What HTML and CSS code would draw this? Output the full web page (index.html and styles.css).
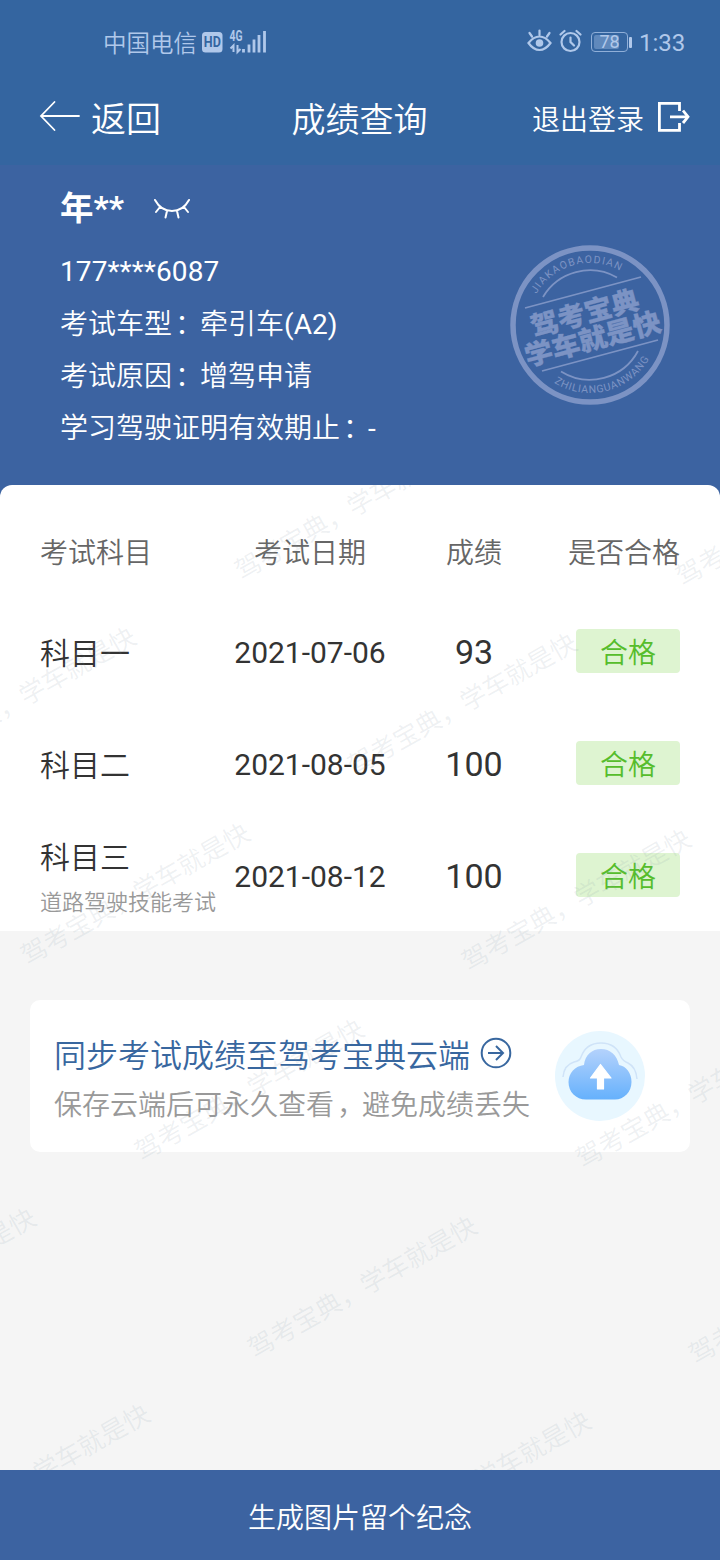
FILE: index.html
```
<!DOCTYPE html>
<html lang="zh-CN">
<head>
<meta charset="utf-8">
<title>成绩查询</title>
<link rel="stylesheet" href="styles.css">
</head>
<body>
<div class="screen">
  <header class="top">
    <div class="status">
      <span class="carrier">中国电信</span>
      <svg class="signal" width="66" height="28" viewBox="0 0 66 28">
        <rect x="1" y="4" width="20.500" height="20.500" rx="3.500" fill="currentColor"/>
        <text class="hd" x="11.300" y="19" text-anchor="middle" textLength="17" lengthAdjust="spacingAndGlyphs">HD</text>
        <text class="net" x="28.500" y="12.500" textLength="13" lengthAdjust="spacingAndGlyphs">4G</text>
        <path d="M32.500 24V17.500l-3 3M36.500 17v7l3-3" fill="none" stroke="currentColor" stroke-width="2"/>
        <path d="M42.500 24.500v-3.500M48 24.500v-8M53 24.500v-13M58 24.500V7M63.500 24.500V3" stroke="currentColor" stroke-width="2.800"/>
      </svg>
      <svg class="sys" width="56" height="28" viewBox="0 0 56 28" fill="none" stroke="currentColor" stroke-width="2.200" stroke-linecap="round">
        <path d="M2.500 15Q7.500 8.500 13.500 8.500T24.500 15Q19.500 22 13.500 22T2.500 15ZM13.500 7V2.500M6 8.500L3.500 5M21 8.500L23.500 5"/>
        <circle cx="13.500" cy="15" r="3.800" fill="currentColor" stroke="none"/>
        <circle cx="44.500" cy="14" r="9"/><path d="M44.500 9.500V14l3.500 3.500M34.500 6.500l4-3.500M54.500 6.500l-4-3.500"/>
      </svg>
      <span class="battery"><i class="charge"></i><b>78</b></span><i class="nub"></i>
      <span class="clock">1:33</span>
    </div>
    <nav class="nav">
      <div class="back">
        <svg width="42" height="32" viewBox="0 0 42 32" fill="none" stroke="#fff" stroke-width="1.800" stroke-linecap="round"><path d="M40 16H2M15.500 2L2 16l13.500 14"/></svg>
        <span>返回</span>
      </div>
      <h1>成绩查询</h1>
      <div class="logout">
        <span>退出登录</span>
        <svg width="34" height="34" viewBox="0 0 34 34" fill="none" stroke="#fff" stroke-width="2.800"><path d="M23.500 11V3.400H3.400v27H23.500V23M14 16.800h18"/><path d="M27 10.500L32 16.800 27 23"/></svg>
      </div>
    </nav>
  </header>

  <section class="profile">
    <div class="info">
      <div class="name"><strong>年**</strong>
        <svg width="38" height="24" viewBox="0 0 38 24" fill="none" stroke="#fff" stroke-width="2" stroke-linecap="round"><path d="M2 3Q8 14 19 14T36 3M7 10l-4 5M31 10l4 5M14 14l-1.500 6.500M24 14l1.500 6.500"/></svg>
      </div>
      <p class="phone">177****6087</p>
      <p>考试车型<span class="mark">：</span>牵引车<span class="latin">(A2)</span></p>
      <p>考试原因<span class="mark">：</span>增驾申请</p>
      <p>学习驾驶证明有效期止<span class="mark">：</span><span class="latin">-</span></p>
    </div>
    <svg class="stamp" width="160" height="160" viewBox="-80 -80 160 160">
      <defs>
        <path id="arc-top" d="M-53.700-31A62 62 0 0 1 31-53.700"/>
        <path id="arc-bottom" d="M-36 57.700A68 68 0 0 0 60 32"/>
      </defs>
      <g fill="none" stroke="currentColor">
        <circle r="77" stroke-width="5.500"/>
        <path stroke-width="1.800" d="M-47-28A54.600 54.600 0 0 1 27-47.500M-29 46.500A54.600 54.600 0 0 0 48 26M-65-17L51-48M-48 46L68 15"/>
      </g>
      <g class="ring">
        <text><textPath href="#arc-top" textLength="96">JIAKAOBAODIAN</textPath></text>
        <text><textPath href="#arc-bottom" textLength="109">ZHILIANGUANWANG</textPath></text>
      </g>
      <g class="slogan" transform="rotate(-15)">
        <text x="-2" y="-3" text-anchor="middle" textLength="111" lengthAdjust="spacingAndGlyphs">驾考宝典</text>
        <text x="-1" y="24" text-anchor="middle" textLength="140" lengthAdjust="spacingAndGlyphs">学车就是快</text>
      </g>
    </svg>
  </section>

  <main>
    <section class="scores">
      <div class="row head"><span>考试科目</span><span>考试日期</span><span>成绩</span><span>是否合格</span></div>
      <div class="row"><div class="subject">科目一</div><span class="date">2021-07-06</span><span class="score">93</span><span class="badge">合格</span></div>
      <div class="row"><div class="subject">科目二</div><span class="date">2021-08-05</span><span class="score">100</span><span class="badge">合格</span></div>
      <div class="row"><div class="subject">科目三<small>道路驾驶技能考试</small></div><span class="date">2021-08-12</span><span class="score">100</span><span class="badge">合格</span></div>
    </section>

    <section class="sync">
      <div>
        <div class="sync-title"><span>同步考试成绩至驾考宝典云端</span>
          <svg width="32" height="32" viewBox="0 0 32 32" fill="none" stroke="currentColor" stroke-width="2"><circle cx="16" cy="16" r="14.300"/><path d="M8 16h15M16 9l7 7-7 7"/></svg>
        </div>
        <p>保存云端后可永久查看<span class="mark">，</span>避免成绩丢失</p>
      </div>
      <svg class="cloud" width="90" height="90" viewBox="0 0 90 90">
        <defs><linearGradient id="sky" x2="0" y2="1"><stop stop-color="#b4d2fc"/><stop offset="1" stop-color="#66b1fc"/></linearGradient></defs>
        <circle cx="45" cy="45" r="45" fill="#e8f7ff"/>
        <path d="M8 46Q9 34 19 31Q25 30 26 26Q31 12 46 12T66 26Q68 30 73 32Q81 36 82 48" fill="none" stroke="#cfe3f8" stroke-width="1.500"/>
        <path d="M31 68.500C21 68.500 13.500 61 13.500 51C13.500 42 20 35 29 34C30 24 37 18 46 18S62 24 64 34C71 35 76.500 42 76.500 51C76.500 61 69 68.500 60 68.500Z" fill="url(#sky)"/>
        <path d="M45.500 33.500L56 47H48.500V58H42.500V47H35.500Z" fill="#fff" stroke="#fff" stroke-width="1.200" stroke-linejoin="round"/>
      </svg>
    </section>
  </main>

  <footer class="action">生成图片留个纪念</footer>

  <svg class="watermark" width="720" height="985" viewBox="0 485 720 985" aria-hidden="true">
    <g text-anchor="middle">
      <text transform="translate(348 507) rotate(-29.600)">驾考宝典，学车就是快</text>
      <text transform="translate(789 513) rotate(-29.600)">驾考宝典，学车就是快</text>
      <text transform="translate(20 696) rotate(-29.600)">驾考宝典，学车就是快</text>
      <text transform="translate(461 702) rotate(-29.600)">驾考宝典，学车就是快</text>
      <text transform="translate(134 892) rotate(-29.600)">驾考宝典，学车就是快</text>
      <text transform="translate(575 898) rotate(-29.600)">驾考宝典，学车就是快</text>
      <text transform="translate(248 1088) rotate(-29.600)">驾考宝典，学车就是快</text>
      <text transform="translate(689 1095) rotate(-29.600)">驾考宝典，学车就是快</text>
      <text transform="translate(-80 1277) rotate(-29.600)">驾考宝典，学车就是快</text>
      <text transform="translate(361 1285) rotate(-29.600)">驾考宝典，学车就是快</text>
      <text transform="translate(802 1291) rotate(-29.600)">驾考宝典，学车就是快</text>
      <text transform="translate(34 1473) rotate(-29.600)">驾考宝典，学车就是快</text>
      <text transform="translate(475 1480) rotate(-29.600)">驾考宝典，学车就是快</text>
    </g>
  </svg>
</div>
</body>
</html>
```
FILE: styles.css
```
* { box-sizing: border-box; margin: 0; padding: 0; }
body { font-family: Roboto, "Noto Sans CJK SC", sans-serif; font-weight: 350; color: #333; }
svg { display: block; flex: none; }
.screen { position: relative; width: 720px; height: 1560px; background: #f5f5f5; display: flex; flex-direction: column; overflow: hidden; }

.top { height: 165px; background: #3465a0; color: #fff; }
.status { height: 84px; padding: 0 36px 0 103px; display: flex; align-items: center; color: #b0c8ea; }
.carrier { font-size: 23.5px; line-height: 34px; padding-top: 3px; }
.signal { margin-left: 4px; }
.hd { font: 700 14px Roboto, sans-serif; fill: #3465a0; }
.net { font: 700 14px Roboto, sans-serif; fill: currentColor; }
.sys { margin-left: auto; }
.battery { position: relative; width: 37px; height: 20px; margin-left: 9px; border: 1.500px solid #90afd8; border-radius: 4px; padding: 2px; display: flex; }
.charge { width: 25px; background: #6089bc; border-radius: 2px; }
.battery b { position: absolute; inset: 0; font-size: 18px; font-weight: 400; line-height: 18px; text-align: center; }
.nub { width: 3px; height: 11px; margin-left: 1px; border-radius: 1px; background: currentColor; }
.clock { margin-left: 7px; font-size: 24px; font-weight: 400; line-height: 30px; width: 45px; white-space: nowrap; padding-top: 2px; }
.nav { height: 70px; padding: 0 30px 0 39px; display: grid; grid-template-columns: 1fr auto 1fr; align-items: center; }
.back { display: flex; align-items: center; gap: 10px; font-size: 35px; line-height: 50px; }
.back span { padding-top: 4px; }
.back svg { margin-top: -6px; }
h1 { font-size: 34px; font-weight: 350; line-height: 50px; margin-right: 10px; padding-top: 2px; }
.logout { display: flex; align-items: center; justify-content: flex-end; gap: 12px; font-size: 28px; line-height: 40px; }
.logout span { padding-top: 3px; }
.logout svg { margin-top: -5px; }

.profile { height: 320px; background: #3c63a1; color: #fff; padding: 17px 50px 0 60px; display: flex; justify-content: space-between; }
.name { display: flex; align-items: center; gap: 29px; height: 64px; line-height: 52px; padding-bottom: 11px; }
.name strong { font-size: 33.5px; font-weight: 700; }
.info p { font-size: 28px; line-height: 52px; }
.info .phone { font-weight: 400; margin-bottom: 1px; letter-spacing: .08px; }
.latin { font-weight: 400; }
.mark { display: inline-block; line-height: 1; transform: translateX(3px); }
.stamp { margin-top: 63px; color: #7c93c4; }
.ring { font: 400 10.5px Roboto, sans-serif; fill: currentColor; }
.slogan { font: 900 27px "Noto Sans CJK SC", sans-serif; fill: currentColor; stroke: currentColor; stroke-width: .3px; }

main { flex: 1; background: linear-gradient(#3c63a1 0 20px, #f5f5f5 20px); }
.scores { height: 446px; background: #fff; border-radius: 12px 12px 0 0; padding-top: 22px; }
.row { height: 112px; padding: 0 40px; display: grid; grid-template-columns: 190px 160px 168px 122px; align-items: center; }
.row > span { text-align: center; }
.row.head { height: 90px; color: #666; font-size: 28px; line-height: 40px; padding-top: 4px; }
.row.head > span:first-child { text-align: left; }
.row.head > span:last-child { text-align: right; }
.subject { font-size: 30px; line-height: 44px; white-space: nowrap; padding-top: 1px; }
.subject small { display: block; font-size: 22px; line-height: 32px; color: #999; margin: 7px 0 0; }
.date { font-size: 30px; font-weight: 400; padding-bottom: 2px; }
.score { font-size: 34px; font-weight: 400; padding-bottom: 2px; }
.badge { width: 104px; height: 44px; justify-self: end; border-radius: 4px; background: #def4d1; color: #56bd2c; font-size: 28px; line-height: 50px; margin-top: -4px; }

.sync { height: 152px; margin: 69px 30px 0; padding: 0 45px 0 24px; border-radius: 10px; background: #fff; display: flex; justify-content: space-between; align-items: center; }
.sync-title { display: flex; align-items: center; gap: 10px; color: #38679f; font-size: 32px; line-height: 50px; white-space: nowrap; }
.sync-title span { padding-top: 8px; }
.sync-title svg { margin-top: 1px; }
.sync p { font-size: 28px; line-height: 46px; color: #999; white-space: nowrap; padding-top: 2px; }

.action { height: 90px; background: #3c63a1; color: #fff; font-size: 28px; line-height: 98px; text-align: center; }
.watermark { position: absolute; left: 0; top: 485px; pointer-events: none; font: 350 25.800px "Noto Sans CJK SC", sans-serif; fill: rgba(130, 150, 165, .14); }
.watermark text { dominant-baseline: central; }
```
